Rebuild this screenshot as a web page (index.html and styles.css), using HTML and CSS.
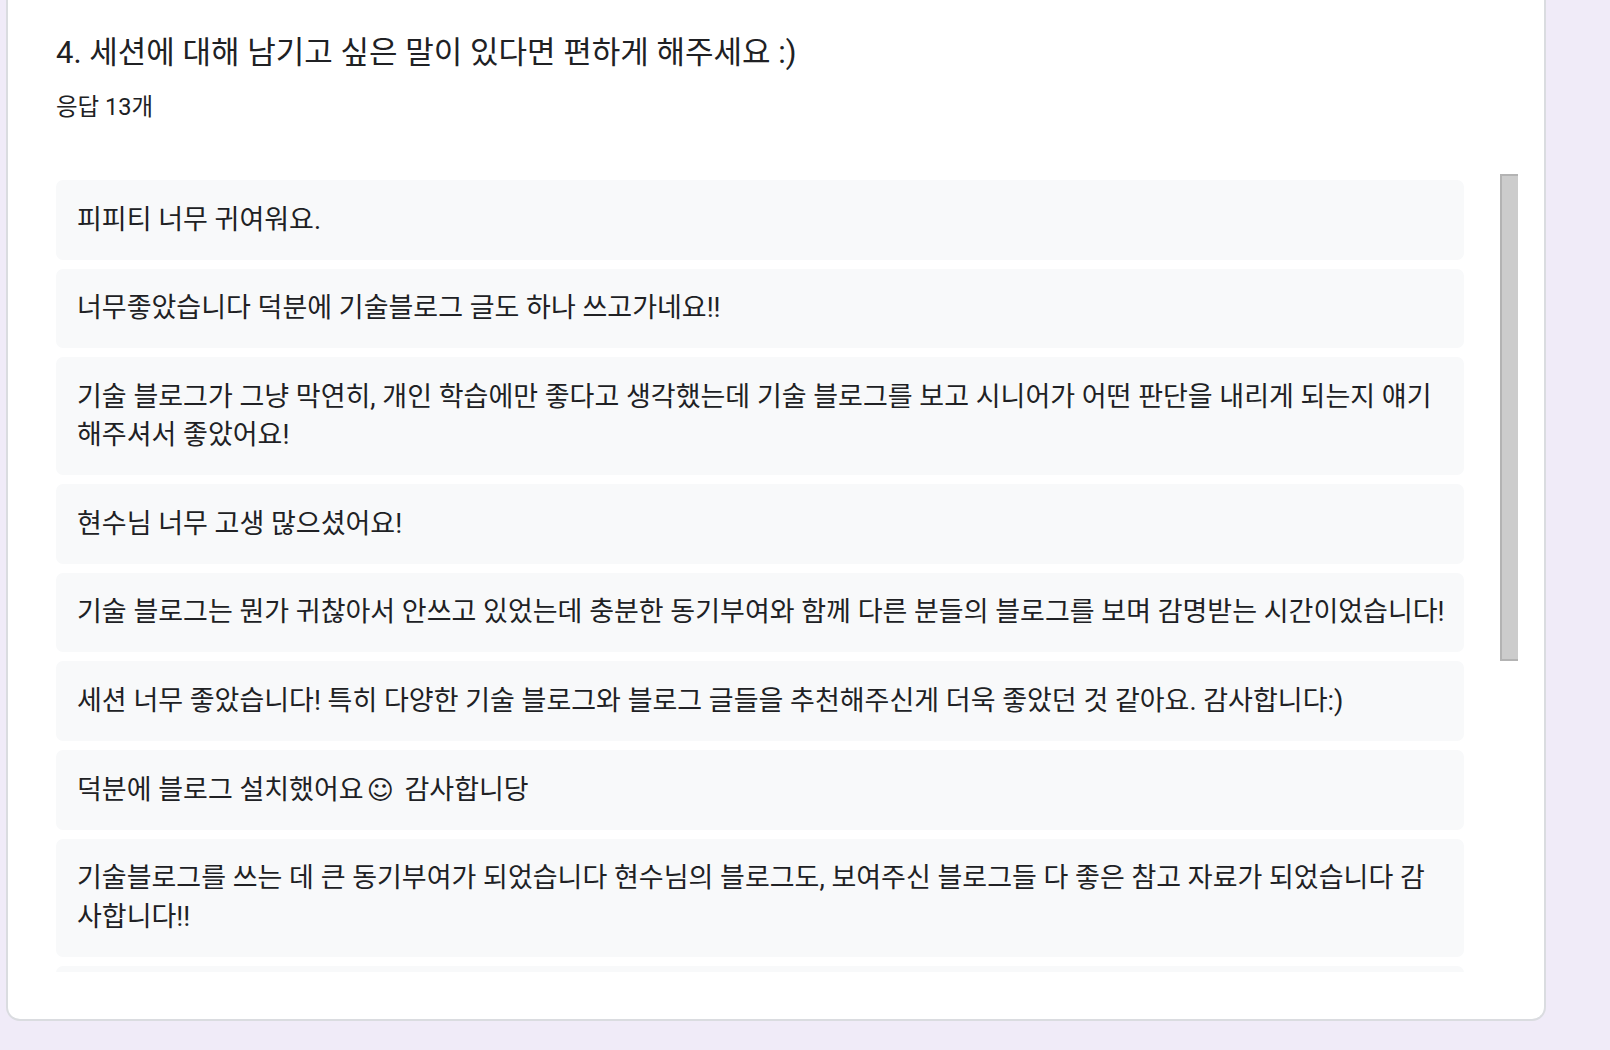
FILE: index.html
```html
<!DOCTYPE html>
<html lang="ko">
<head>
<meta charset="utf-8">
<title>응답 요약</title>
<link rel="stylesheet" href="styles.css">
</head>
<body>
<div class="card">
  <h2 class="question">4. 세션에 대해 남기고 싶은 말이 있다면 편하게 해주세요 :)</h2>
  <div class="count">응답 13개</div>
  <div class="answers">
    <div class="viewport">
      <div class="answer">피피티 너무 귀여워요.</div>
      <div class="answer">너무좋았습니다 덕분에 기술블로그 글도 하나 쓰고가네요!!</div>
      <div class="answer">기술 블로그가 그냥 막연히, 개인 학습에만 좋다고 생각했는데 기술 블로그를 보고 시니어가 어떤 판단을 내리게 되는지 얘기 해주셔서 좋았어요!</div>
      <div class="answer">현수님 너무 고생 많으셨어요!</div>
      <div class="answer">기술 블로그는 뭔가 귀찮아서 안쓰고 있었는데 충분한 동기부여와 함께 다른 분들의 블로그를 보며 감명받는 시간이었습니다!</div>
      <div class="answer">세션 너무 좋았습니다! 특히 다양한 기술 블로그와 블로그 글들을 추천해주신게 더욱 좋았던 것 같아요. 감사합니다:)</div>
      <div class="answer">덕분에 블로그 설치했어요<span class="smile">☺</span> 감사합니당</div>
      <div class="answer">기술블로그를 쓰는 데 큰 동기부여가 되었습니다 현수님의 블로그도, 보여주신 블로그들 다 좋은 참고 자료가 되었습니다 감사합니다!!</div>
      <div class="answer">&nbsp;</div>
    </div>
    <div class="scrollbar"><div class="thumb"></div></div>
  </div>
</div>
</body>
</html>
```

FILE: styles.css
```css
html, body {
  margin: 0;
  padding: 0;
}

body {
  background: #f0ebf8;
  font-family: Roboto, "Noto Sans CJK KR", sans-serif;
  color: #202124;
  height: 1050px;
  overflow: hidden;
}

.card {
  box-sizing: border-box;
  width: 1540px;
  margin-left: 6px;
  height: 1021px;
  background: #ffffff;
  border: 2px solid #dadce0;
  border-top: none;
  border-radius: 0 0 14px 14px;
  padding: 33px 0 0 48px;
}

.question {
  margin: 0;
  font-size: 31px;
  font-weight: 400;
  line-height: 40px;
  letter-spacing: 0;
}

.count {
  margin-top: 20px;
  font-size: 23.5px;
  line-height: 28px;
}

.answers {
  margin-top: 53px;
  display: flex;
  gap: 36px;
  align-items: flex-start;
}

.viewport {
  width: 1408px;
  height: 798px;
  box-sizing: border-box;
  padding-top: 6px;
  overflow: hidden;
  display: flex;
  flex-direction: column;
  gap: 9.1px;
}

.answer {
  flex: none;
  background: #f8f9fa;
  border-radius: 7px;
  padding: 20.5px 16px 20.5px 21px;
  font-size: 27px;
  line-height: 38.5px;
}

.smile {
  font-family: "DejaVu Sans", sans-serif;
  font-size: 26px;
  margin: 0 4px 0 3px;
}

.scrollbar {
  width: 18px;
  height: 798px;
}

.thumb {
  box-sizing: border-box;
  height: 487px;
  background: #cccccc;
  border-left: 2px solid #b3b3b3;
  border-top: 2px solid #b3b3b3;
  border-bottom: 2px solid #b3b3b3;
}
```
